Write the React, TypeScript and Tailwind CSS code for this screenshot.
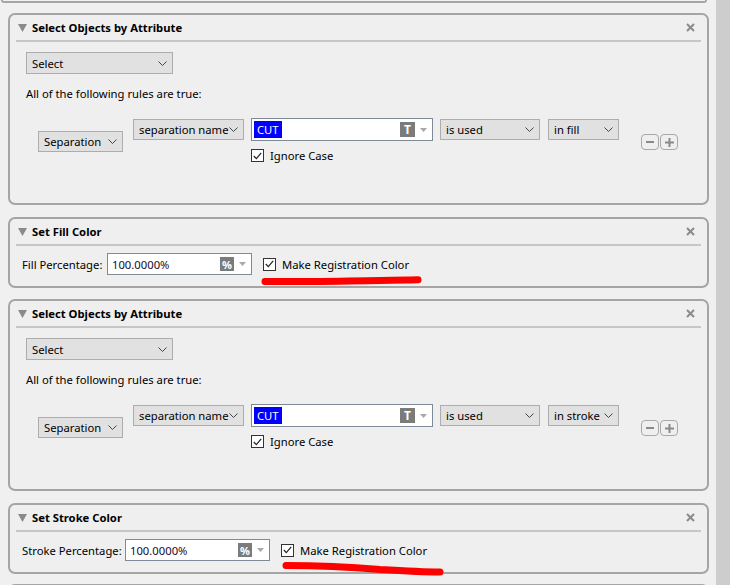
import React from 'react';

const font = { fontFamily: '"Noto Sans", "Open Sans", sans-serif' };

function Chevron() {
  return (
    <svg width="9" height="5" viewBox="0 0 9 5" className="shrink-0">
      <polyline points="0.5,0.5 4.5,4.5 8.5,0.5" fill="none" stroke="#444" strokeWidth="1" />
    </svg>
  );
}

function Dropdown({ label, className }: { label: string; className: string }) {
  return (
    <div className={`flex items-center justify-between whitespace-nowrap border border-[#adadad] bg-[#e1e1e1] pl-[5px] pr-[5px] text-[11.25px] text-black ${className}`}>
      <span className="pt-[1px] leading-none">{label}</span>
      <Chevron />
    </div>
  );
}

function Check({ label }: { label: string }) {
  return (
    <div className="flex items-center gap-[6px] whitespace-nowrap text-[11.25px] text-black">
      <div className="flex h-[13px] w-[13px] items-center justify-center border border-[#333] bg-white">
        <svg width="9" height="8" viewBox="0 0 9 8">
          <polyline points="0.8,4 3.3,6.6 8.2,0.8" fill="none" stroke="#222" strokeWidth="1.2" />
        </svg>
      </div>
      <span className="pt-[1px] leading-none">{label}</span>
    </div>
  );
}

function SmallArrow() {
  return (
    <svg width="7" height="4" viewBox="0 0 7 4">
      <polygon points="0,0 7,0 3.5,4" fill="#a8a8a8" />
    </svg>
  );
}

function PanelHeader({ title }: { title: string }) {
  return (
    <>
      <div className="flex h-[25px] items-center pl-[8px] pr-[12px]">
        <svg width="9" height="8" viewBox="0 0 9 8" className="mr-[5px]">
          <polygon points="0,0 9,0 4.5,8" fill="#8a8a8a" />
        </svg>
        <span className="flex-1 whitespace-nowrap pt-[1px] text-[11.25px] font-bold text-black">{title}</span>
        <svg width="9" height="9" viewBox="0 0 9 9">
          <line x1="1" y1="1" x2="8" y2="8" stroke="#8a8a8a" strokeWidth="2" />
          <line x1="8" y1="1" x2="1" y2="8" stroke="#8a8a8a" strokeWidth="2" />
        </svg>
      </div>
      <div className="mx-[6px] h-[2px] bg-[#c6c6c6]" />
    </>
  );
}

function RulePanel({ where, className }: { where: string; className: string }) {
  return (
    <div className={`h-[192px] rounded-[7px] border-2 border-[#a5a5a5] bg-[#efefef] ${className}`}>
      <PanelHeader title="Select Objects by Attribute" />
      <div className="pl-[16px] pt-[10px]">
        <Dropdown label="Select" className="h-[22px] w-[147px]" />
        <div className="mt-[11px] h-[16px] whitespace-nowrap pt-[1px] text-[11.25px] leading-[16px] text-black">All of the following rules are true:</div>
        <div className="mt-[17px] flex items-start">
          <Dropdown label="Separation" className="ml-[12px] mt-[13px] h-[21px] w-[85px]" />
          <Dropdown label="separation name" className="ml-[10px] mt-[1px] h-[21px] w-[111px]" />
          <div className="ml-[7px] flex flex-col">
            <div className="flex h-[23px] w-[182px] items-center border border-[#7e8a97] bg-white pl-[2px] pr-[5px]">
              <span className="flex h-[17px] items-center bg-[#0000ff] px-[3px] text-[11.25px] leading-none text-white">CUT</span>
              <div className="flex-1" />
              <div className="flex h-[15px] w-[15px] items-center justify-center bg-[#7b7b7b] text-[12px] font-bold leading-none text-white">T</div>
              <div className="ml-[5px]"><SmallArrow /></div>
            </div>
            <div className="mt-[8px]">
              <Check label="Ignore Case" />
            </div>
          </div>
          <Dropdown label="is used" className="ml-[7px] mt-[1px] h-[21px] w-[100px]" />
          <Dropdown label={where} className="ml-[8px] mt-[1px] h-[21px] w-[71px]" />
          <div className="ml-[22px] mt-[16px] flex gap-[1px]">
            <div className="flex h-[16px] w-[18px] items-center justify-center rounded-[4px] border-[1.5px] border-[#a8a8a8]">
              <div className="h-[2px] w-[8px] bg-[#8a8a8a]" />
            </div>
            <div className="flex h-[16px] w-[18px] items-center justify-center rounded-[4px] border-[1.5px] border-[#a8a8a8]">
              <svg width="9" height="9" viewBox="0 0 9 9">
                <rect x="3.5" y="0" width="2" height="9" fill="#8a8a8a" />
                <rect x="0" y="3.5" width="9" height="2" fill="#8a8a8a" />
              </svg>
            </div>
          </div>
        </div>
      </div>
    </div>
  );
}

function ColorPanel({ title, label, labelW, className }: { title: string; label: string; labelW: string; className: string }) {
  return (
    <div className={`h-[71px] rounded-[7px] border-2 border-[#a5a5a5] bg-[#efefef] ${className}`}>
      <PanelHeader title={title} />
      <div className="flex items-center pl-[12px] pt-[7px]">
        <span className={`whitespace-nowrap pt-[1px] text-[11.25px] leading-none text-black ${labelW}`}>{label}</span>
        <div className="flex h-[22px] w-[145px] items-center border border-[#7e8a97] bg-white pl-[4px] pr-[5px]">
          <span className="flex-1 pt-[1px] text-[11.25px] leading-none text-[#1a0a2a]">100.0000%</span>
          <div className="flex h-[14px] w-[14px] items-center justify-center bg-[#7b7b7b] text-[11px] font-bold leading-none text-white">%</div>
          <div className="ml-[5px]"><SmallArrow /></div>
        </div>
        <div className="ml-[11px]">
          <Check label="Make Registration Color" />
        </div>
      </div>
    </div>
  );
}

export default function App() {
  return (
    <div className="relative flex h-[585px] w-[730px] overflow-hidden bg-[#f0f0f0]" style={font}>
      <div className="w-[716px] pl-[8px] pr-[7px]">
        <div className="ml-[-7px] h-[3px] w-[706px] rounded-b-[6px] border-x-2 border-b-2 border-[#a5a5a5]" />
        <RulePanel where="in fill" className="mt-[10px]" />
        <ColorPanel title="Set Fill Color" label="Fill Percentage:" labelW="w-[85px]" className="mt-[12px]" />
        <RulePanel where="in stroke" className="mt-[11px]" />
        <ColorPanel title="Set Stroke Color" label="Stroke Percentage:" labelW="w-[103px]" className="mt-[12px]" />
        <div className="mt-[10px] h-[20px] rounded-t-[7px] border-x-2 border-t-2 border-[#a5a5a5]" />
      </div>
      <div className="h-[585px] w-[14px] bg-[#cdcdcd]" />
      <svg className="pointer-events-none absolute left-0 top-0" width="730" height="585">
        <path d="M265,281.5 C300,282 340,281 380,280.5 C400,280 410,280 418,279.8" fill="none" stroke="#ff0000" strokeWidth="7" strokeLinecap="round" />
        <path d="M286,565.5 C320,565.5 350,567 380,569.5 C405,571 425,572 440,572" fill="none" stroke="#ff0000" strokeWidth="7" strokeLinecap="round" />
      </svg>
    </div>
  );
}
